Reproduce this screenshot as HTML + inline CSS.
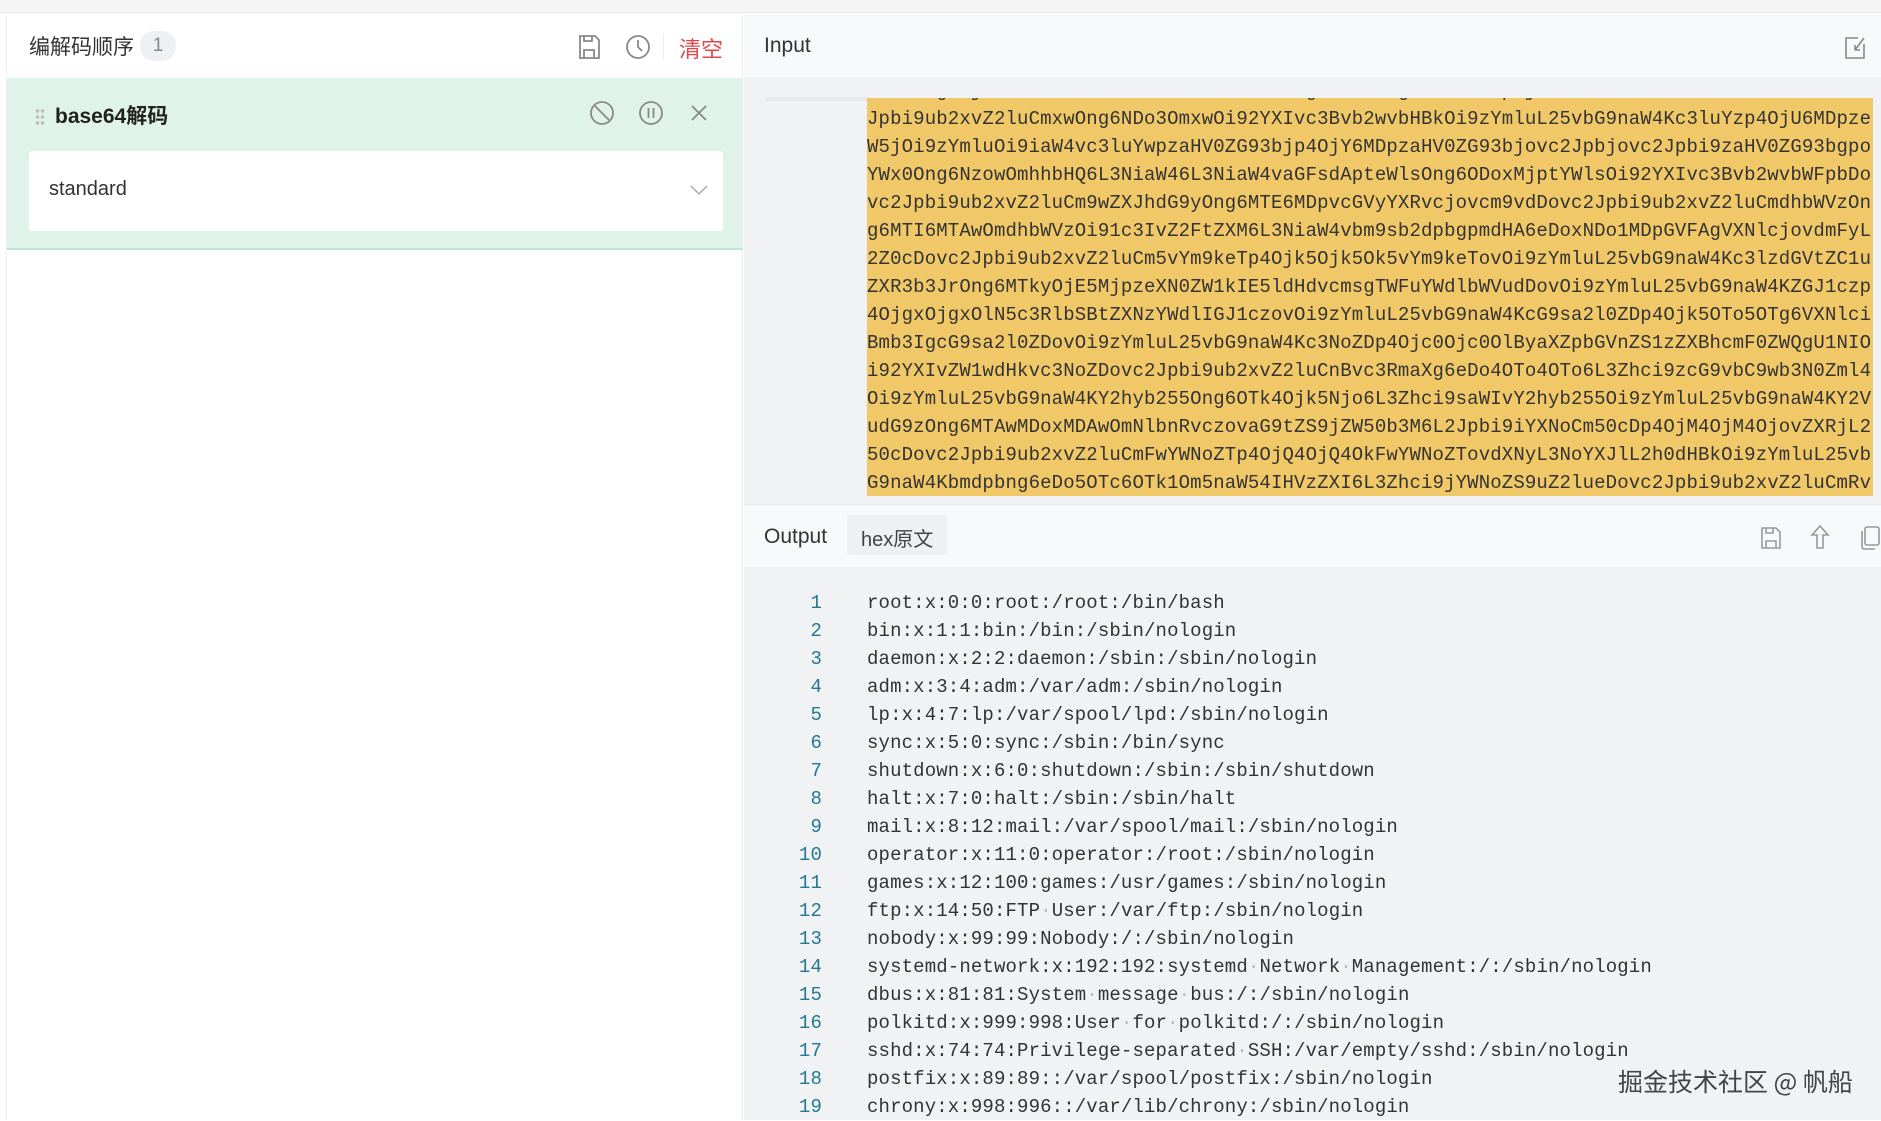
<!DOCTYPE html>
<html><head><meta charset="utf-8"><style>
*{margin:0;padding:0;box-sizing:border-box}
body{width:1881px;height:1120px;overflow:hidden;background:#fff;font-family:"Liberation Sans","Noto Sans CJK SC",sans-serif;position:relative}
.top{position:absolute;left:0;top:0;width:1881px;height:13px;background:#f5f5f6;border-bottom:1px solid #e8e8e8}
.left{position:absolute;left:6px;top:14px;width:737px;height:1106px;background:#fff;border-left:1px solid #eee;border-right:1px solid #eee}
.lh{height:64px;display:flex;align-items:center;padding-left:22px;font-size:21px;color:#333}
.badge{display:inline-block;background:#eef0f3;border-radius:14px;width:36px;height:30px;text-align:center;line-height:30px;color:#888;margin-left:6px;font-size:19px}
.card{position:absolute;left:0;top:64px;width:736px;height:172px;background:#e0f3ea;border-bottom:2px solid #bde6d6}
.ct{position:absolute;left:48px;top:22px;font-size:21px;font-weight:bold;color:#222}
.sel{position:absolute;left:22px;top:73px;width:694px;height:80px;background:#fff;border-radius:3px}
.sel span{position:absolute;left:20px;top:27px;font-size:20px;color:#333}
.ih{position:absolute;left:744px;top:14px;width:1137px;height:63px;background:#f8f9fa;font-size:21px;color:#333}
.ib{position:absolute;left:744px;top:77px;width:1137px;height:427px;background:#f0f2f4}
.mono{font-family:"Liberation Mono",monospace;font-size:19px;line-height:28px;white-space:pre;letter-spacing:0.14px}
.yel{position:absolute;left:867px;top:98px;width:1006px;height:398px;background:#f1c867;overflow:hidden;color:#333}
.yel div{margin-top:-21px}
.oh{position:absolute;left:744px;top:504px;width:1137px;height:64px;background:#f8f9fa;border-top:1px solid #e8e8e8;border-bottom:1px solid #eceef0;font-size:21px;color:#333}
.ob{position:absolute;left:744px;top:568px;width:1137px;height:552px;background:#f0f2f4}
.ln{position:absolute;left:744px;top:589px;width:78px;text-align:right;color:#237893}
.ot{position:absolute;left:867px;top:589px;color:#333}
.d{color:#bbb}
.wm{position:absolute;left:1618px;top:1063px;font-size:25px;color:#444;font-family:"Noto Sans CJK SC",sans-serif}
svg{position:absolute}
</style></head><body>
<div class="top"></div>
<div class="left">
 <div class="lh">编解码顺序<span class="badge">1</span></div>
 <svg style="left:570px;top:20px" width="24" height="26" viewBox="0 0 24 26" fill="none" stroke="#888" stroke-width="1.8"><path d="M3 2h15l4 4v18H3z"/><path d="M7 24v-8h10v8"/><path d="M7 2v5h8V2"/></svg>
 <svg style="left:618px;top:20px" width="26" height="26" viewBox="0 0 26 26" fill="none" stroke="#888" stroke-width="1.8"><circle cx="13" cy="13" r="11"/><path d="M13 6v7l4 4"/></svg>
 <div style="position:absolute;left:656px;top:20px;width:1px;height:26px;background:#eee"></div>
 <div style="position:absolute;left:672px;top:18px;font-size:22px;color:#e0474b">清空</div>
 <div class="card">
  <div style="position:absolute;left:28px;top:30px;width:10px;height:18px;background:radial-gradient(circle,#bbb 1.5px,transparent 2px) 0 0/5px 6px"></div>
  <div class="ct">base64解码</div>
  <svg style="left:582px;top:22px" width="26" height="26" viewBox="0 0 26 26" fill="none" stroke="#888" stroke-width="1.8"><circle cx="13" cy="13" r="11"/><path d="M6 6l14 14"/></svg>
  <svg style="left:631px;top:22px" width="26" height="26" viewBox="0 0 26 26" fill="none" stroke="#888" stroke-width="1.8"><circle cx="13" cy="13" r="11"/><path d="M10.5 8v10M15.5 8v10"/></svg>
  <svg style="left:682px;top:25px" width="20" height="20" viewBox="0 0 20 20" fill="none" stroke="#888" stroke-width="1.8"><path d="M3 3l14 14M17 3L3 17"/></svg>
  <div class="sel"><span>standard</span>
   <svg style="left:661px;top:33px" width="18" height="12" viewBox="0 0 18 12" fill="none" stroke="#aaa" stroke-width="1.5"><path d="M1 2l8 8 8-8"/></svg></div>
 </div>
</div>
<div class="ih"><div style="position:absolute;left:20px;top:20px">Input</div>
 <svg style="left:1100px;top:22px" width="22" height="24" viewBox="0 0 22 24" fill="none" stroke="#888" stroke-width="1.6"><path d="M14 2H2v20h18V8"/><path d="M11 14l9-12M11 14V9M11 14h5"/></svg></div>
<div class="ib"></div>
<div style="position:absolute;left:765px;top:97px;width:102px;height:4px;background:#e6e8ea"></div>
<div class="yel mono"><div>b290OngwOjA6cm9vdDovcm9vdDovYmluL2Jhc2gKYmluOng6MToxOmJpbjovYmluOi9zYmluL25vbG9naW4KZGFlbW9uOng6MjoyOmRhZW1vbjovc2
Jpbi9ub2xvZ2luCmxwOng6NDo3OmxwOi92YXIvc3Bvb2wvbHBkOi9zYmluL25vbG9naW4Kc3luYzp4OjU6MDpze
W5jOi9zYmluOi9iaW4vc3luYwpzaHV0ZG93bjp4OjY6MDpzaHV0ZG93bjovc2Jpbjovc2Jpbi9zaHV0ZG93bgpo
YWx0Ong6NzowOmhhbHQ6L3NiaW46L3NiaW4vaGFsdApteWlsOng6ODoxMjptYWlsOi92YXIvc3Bvb2wvbWFpbDo
vc2Jpbi9ub2xvZ2luCm9wZXJhdG9yOng6MTE6MDpvcGVyYXRvcjovcm9vdDovc2Jpbi9ub2xvZ2luCmdhbWVzOn
g6MTI6MTAwOmdhbWVzOi91c3IvZ2FtZXM6L3NiaW4vbm9sb2dpbgpmdHA6eDoxNDo1MDpGVFAgVXNlcjovdmFyL
2Z0cDovc2Jpbi9ub2xvZ2luCm5vYm9keTp4Ojk5Ojk5Ok5vYm9keTovOi9zYmluL25vbG9naW4Kc3lzdGVtZC1u
ZXR3b3JrOng6MTkyOjE5MjpzeXN0ZW1kIE5ldHdvcmsgTWFuYWdlbWVudDovOi9zYmluL25vbG9naW4KZGJ1czp
4OjgxOjgxOlN5c3RlbSBtZXNzYWdlIGJ1czovOi9zYmluL25vbG9naW4KcG9sa2l0ZDp4Ojk5OTo5OTg6VXNlci
Bmb3IgcG9sa2l0ZDovOi9zYmluL25vbG9naW4Kc3NoZDp4Ojc0Ojc0OlByaXZpbGVnZS1zZXBhcmF0ZWQgU1NIO
i92YXIvZW1wdHkvc3NoZDovc2Jpbi9ub2xvZ2luCnBvc3RmaXg6eDo4OTo4OTo6L3Zhci9zcG9vbC9wb3N0Zml4
Oi9zYmluL25vbG9naW4KY2hyb255Ong6OTk4Ojk5Njo6L3Zhci9saWIvY2hyb255Oi9zYmluL25vbG9naW4KY2V
udG9zOng6MTAwMDoxMDAwOmNlbnRvczovaG9tZS9jZW50b3M6L2Jpbi9iYXNoCm50cDp4OjM4OjM4OjovZXRjL2
50cDovc2Jpbi9ub2xvZ2luCmFwYWNoZTp4OjQ4OjQ4OkFwYWNoZTovdXNyL3NoYXJlL2h0dHBkOi9zYmluL25vb
G9naW4Kbmdpbng6eDo5OTc6OTk1Om5naW54IHVzZXI6L3Zhci9jYWNoZS9uZ2lueDovc2Jpbi9ub2xvZ2luCmRv</div></div>
<div class="oh"><div style="position:absolute;left:20px;top:20px">Output</div>
 <div style="position:absolute;left:103px;top:10px;width:100px;height:40px;background:#eef0f2;border-radius:3px;padding:8px 0 0 14px;font-size:20px;color:#444">hex原文</div>
 <svg style="left:1016px;top:21px" width="22" height="24" viewBox="0 0 22 24" fill="none" stroke="#999" stroke-width="1.6"><path d="M2 2h14l4 4v16H2z"/><path d="M6 22v-7h10v7"/><path d="M6 2v5h7V2"/></svg>
 <svg style="left:1066px;top:19px" width="20" height="26" viewBox="0 0 20 26" fill="none" stroke="#999" stroke-width="1.6"><path d="M10 2L2 11h5v13h6V11h5z"/></svg>
 <svg style="left:1114px;top:20px" width="23" height="26" viewBox="0 0 23 26" fill="none" stroke="#999" stroke-width="1.6"><rect x="7" y="2" width="14" height="18" rx="2"/><path d="M4 6v16a2 2 0 0 0 2 2h11"/></svg>
</div>
<div class="ob"></div>
<div class="ln mono">1
2
3
4
5
6
7
8
9
10
11
12
13
14
15
16
17
18
19</div>
<div class="ot mono">root:x:0:0:root:/root:/bin/bash
bin:x:1:1:bin:/bin:/sbin/nologin
daemon:x:2:2:daemon:/sbin:/sbin/nologin
adm:x:3:4:adm:/var/adm:/sbin/nologin
lp:x:4:7:lp:/var/spool/lpd:/sbin/nologin
sync:x:5:0:sync:/sbin:/bin/sync
shutdown:x:6:0:shutdown:/sbin:/sbin/shutdown
halt:x:7:0:halt:/sbin:/sbin/halt
mail:x:8:12:mail:/var/spool/mail:/sbin/nologin
operator:x:11:0:operator:/root:/sbin/nologin
games:x:12:100:games:/usr/games:/sbin/nologin
ftp:x:14:50:FTP<span class="d">·</span>User:/var/ftp:/sbin/nologin
nobody:x:99:99:Nobody:/:/sbin/nologin
systemd-network:x:192:192:systemd<span class="d">·</span>Network<span class="d">·</span>Management:/:/sbin/nologin
dbus:x:81:81:System<span class="d">·</span>message<span class="d">·</span>bus:/:/sbin/nologin
polkitd:x:999:998:User<span class="d">·</span>for<span class="d">·</span>polkitd:/:/sbin/nologin
sshd:x:74:74:Privilege-separated<span class="d">·</span>SSH:/var/empty/sshd:/sbin/nologin
postfix:x:89:89::/var/spool/postfix:/sbin/nologin
chrony:x:998:996::/var/lib/chrony:/sbin/nologin</div>
<div class="wm">掘金技术社区 @ 帆船</div>
</body></html>
